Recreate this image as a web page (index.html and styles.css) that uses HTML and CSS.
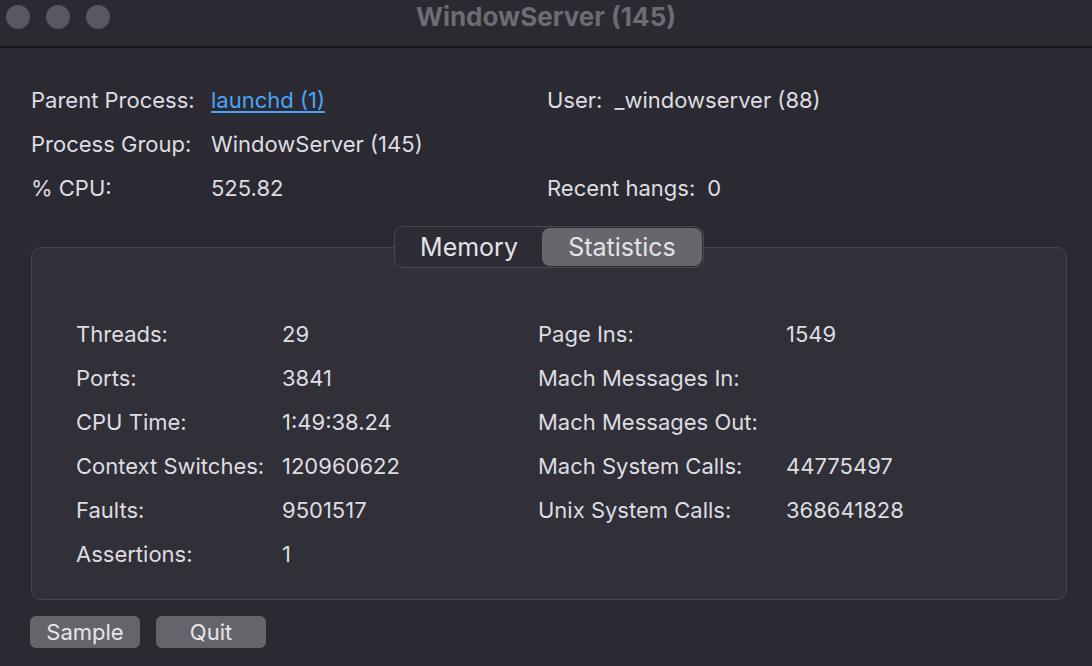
FILE: index.html
```html
<!DOCTYPE html>
<html>
<head>
<meta charset="utf-8">
<link rel="stylesheet" href="styles.css">
</head>
<body>
<div class="window">
  <div class="titlebar">
    <div class="lights"><span class="light"></span><span class="light"></span><span class="light"></span></div>
    <div class="title">WindowServer (145)</div>
  </div>
  <div class="content">
    <div class="info">
      <div class="info-left">
        <div class="row"><span class="lbl">Parent Process:</span><a class="link" href="#">launchd (1)</a></div>
        <div class="row"><span class="lbl">Process Group:</span><span>WindowServer (145)</span></div>
        <div class="row"><span class="lbl">% CPU:</span><span>525.82</span></div>
      </div>
      <div class="info-right">
        <div class="row"><span class="rl">User:</span><span>_windowserver (88)</span></div>
        <div class="row"></div>
        <div class="row"><span class="rl">Recent hangs:</span><span>0</span></div>
      </div>
    </div>
    <div class="group">
      <div class="seg">
        <div class="seg-item">Memory</div>
        <div class="seg-item selected">Statistics</div>
      </div>
      <div class="box">
        <div class="stats">
          <span>Threads:</span><span>29</span><span>Page Ins:</span><span>1549</span>
          <span>Ports:</span><span>3841</span><span>Mach Messages In:</span><span></span>
          <span>CPU Time:</span><span>1:49:38.24</span><span>Mach Messages Out:</span><span></span>
          <span>Context Switches:</span><span>120960622</span><span>Mach System Calls:</span><span>44775497</span>
          <span>Faults:</span><span>9501517</span><span>Unix System Calls:</span><span>368641828</span>
          <span>Assertions:</span><span>1</span><span></span><span></span>
        </div>
      </div>
    </div>
    <div class="buttons">
      <button class="btn">Sample</button>
      <button class="btn">Quit</button>
    </div>
  </div>
</div>
</body>
</html>
```
FILE: styles.css
```css
html, body {
  margin: 0;
  padding: 0;
  background: #2b2a32;
}
body {
  font-family: Inter, "Noto Sans", sans-serif;
  color: #dedde2;
  font-size: 22px;
}
.window {
  width: 1092px;
  height: 666px;
  overflow: hidden;
  background: #2b2a32;
}
.titlebar {
  height: 46px;
  border-bottom: 2px solid #131217;
  display: flex;
  align-items: center;
  position: relative;
}
.lights {
  display: flex;
  gap: 16px;
  padding-left: 6px;
  margin-top: -12px;
}
.light {
  width: 24px;
  height: 24px;
  border-radius: 50%;
  background: #595760;
}
.title {
  position: absolute;
  left: 0;
  right: 0;
  top: 1px;
  text-align: center;
  font-weight: 700;
  font-size: 26px;
  color: #6d6c73;
}
.content {
  padding: 30px 25px 0 31px;
}
.info {
  display: flex;
}
.info-left {
  width: 516px;
}
.row {
  height: 44px;
  display: flex;
  align-items: center;
}
.lbl {
  width: 180px;
}
.rl {
  margin-right: 12px;
}
.link {
  color: #4aa3f7;
  text-decoration: underline;
  text-underline-offset: 3px;
}
.group {
  margin-top: 16px;
  display: flex;
  flex-direction: column;
  align-items: center;
}
.seg {
  display: flex;
  border: 1px solid #4b4a52;
  border-radius: 9px;
  background: #2d2c34;
  margin-bottom: -21px;
  z-index: 1;
  padding: 1px;
  box-sizing: border-box;
  height: 42px;
}
.seg-item {
  display: flex;
  align-items: center;
  justify-content: center;
  font-size: 25px;
  color: #e4e3e8;
}
.seg-item:first-child {
  width: 146px;
}
.seg-item.selected {
  width: 160px;
  background: #67666d;
  border-radius: 8px;
}
.box {
  align-self: stretch;
  border: 1px solid #46454d;
  border-radius: 10px;
  background: #312f38;
  padding: 64px 0 23px 44px;
}
.stats {
  display: grid;
  grid-template-columns: 206px 256px 248px 1fr;
  grid-auto-rows: 44px;
  align-items: center;
}
.buttons {
  margin-top: 16px;
  margin-left: -1px;
  display: flex;
  gap: 16px;
}
.btn {
  width: 110px;
  height: 32px;
  border: none;
  border-radius: 6px;
  background: #65646a;
  color: #e6e5ea;
  font-family: Inter, "Noto Sans", sans-serif;
  font-size: 22px;
  padding: 0;
}
```
